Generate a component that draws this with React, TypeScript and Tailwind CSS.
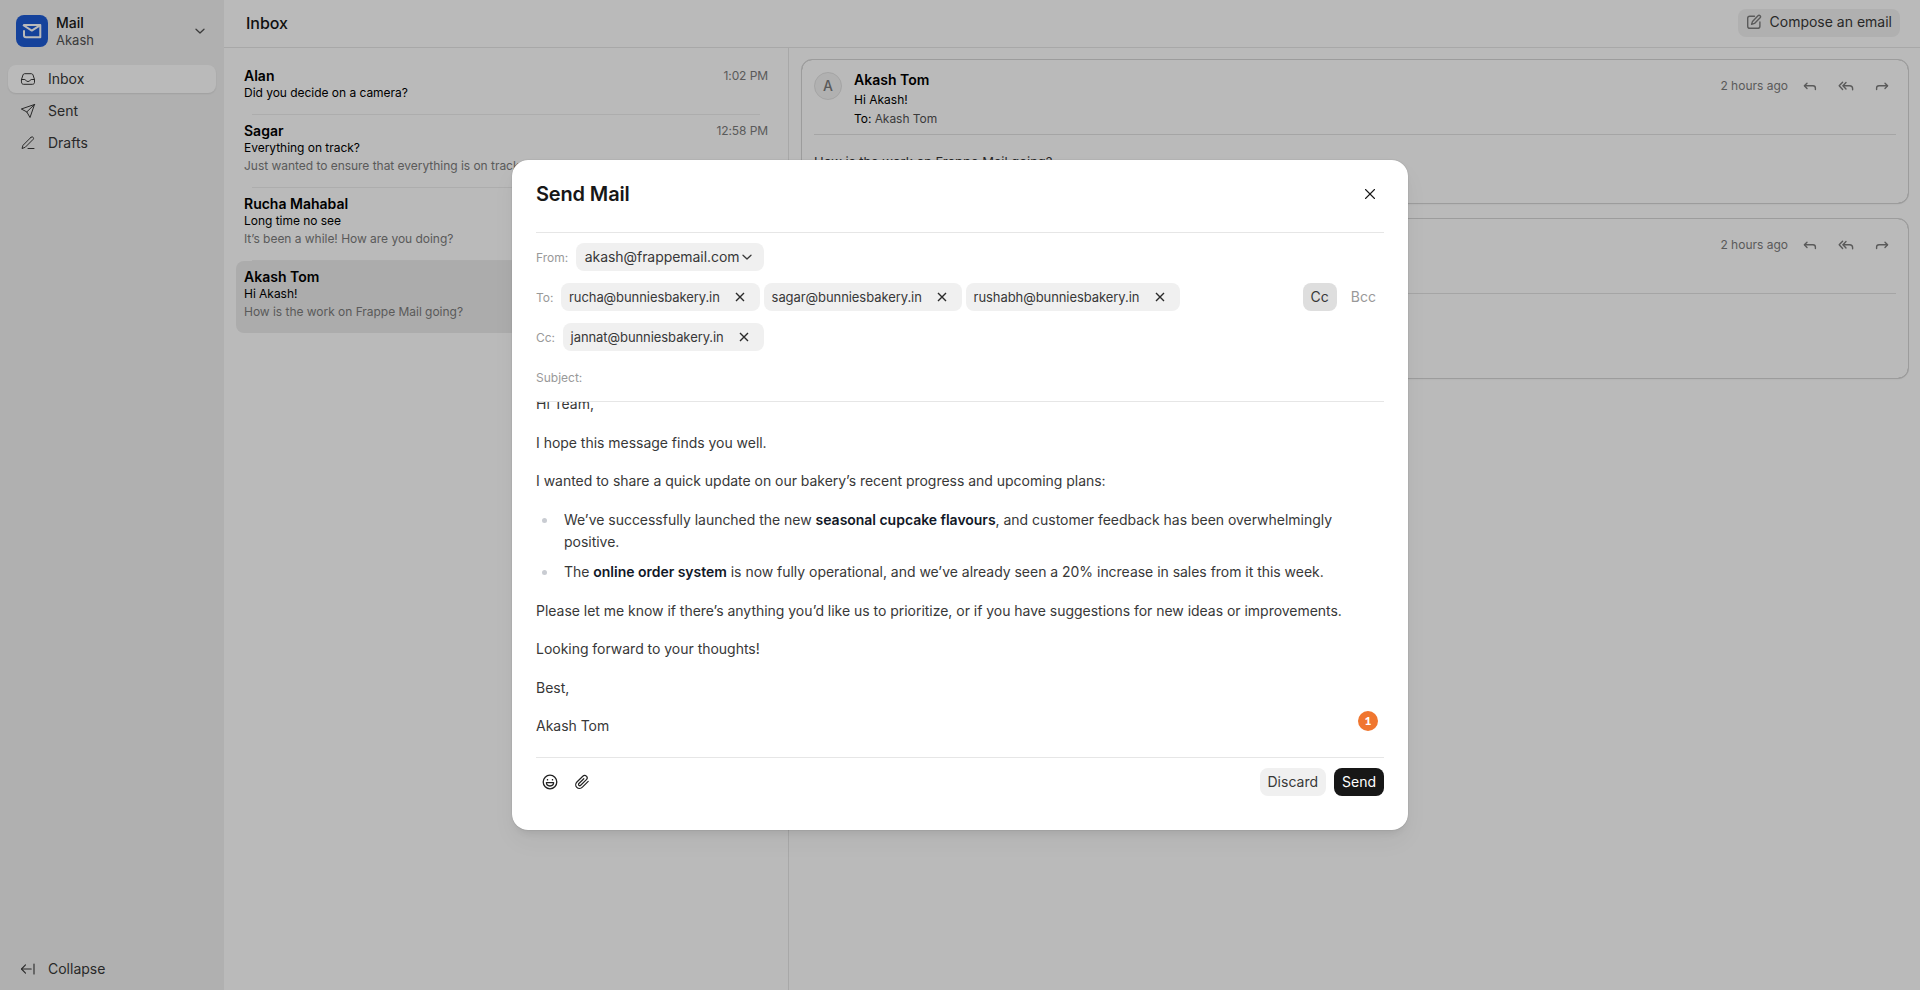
import React from 'react';

type IconProps = { d: string[]; className?: string; size?: number; sw?: number };

function Icon({ d, className = '', size = 16, sw = 1 }: IconProps) {
  return (
    <svg
      width={size}
      height={size}
      viewBox="0 0 16 16"
      fill="none"
      stroke="currentColor"
      strokeWidth={sw}
      strokeLinecap="round"
      strokeLinejoin="round"
      className={`shrink-0 ${className}`}
    >
      {d.map((p) => (
        <path key={p} d={p} />
      ))}
    </svg>
  );
}

const CHEVRON = ['M4 6.25L8 10L12 6.25'];
const CLOSE = ['M3.5 3.5L12.5 12.5', 'M12.5 3.5L3.5 12.5'];
const REPLY = ['M5 4.2L2.4 6.8L5 9.4', 'M2.6 6.8H11C12.5 6.8 13.4 7.7 13.4 9.2V10.6'];
const REPLY_ALL = ['M4.6 3.2L1.2 6.8L4.6 10.4', 'M8 3.6L5 6.8L8 10', 'M5.2 6.8H11.6C13.4 6.8 14.6 7.8 14.6 9.6V10.8'];
const FORWARD = ['M11 4.2L13.6 6.8L11 9.4', 'M13.4 6.8H5C3.5 6.8 2.6 7.7 2.6 9.2V10.6'];

function Sidebar() {
  const items = [
    {
      label: 'Inbox',
      icon: [
        'M1.5 8.5L3 3.9C3.3 3.1 3.8 2.7 4.6 2.7H11.4C12.2 2.7 12.7 3.1 13 3.9L14.5 8.5V11.3C14.5 12.5 13.7 13.3 12.5 13.3H3.5C2.3 13.3 1.5 12.5 1.5 11.3Z',
        'M1.5 8.5H4.8C5.2 8.5 5.4 8.7 5.6 9.1C6 10 6.8 10.5 8 10.5C9.2 10.5 10 10 10.4 9.1C10.6 8.7 10.8 8.5 11.2 8.5H14.5',
      ],
    },
    { label: 'Sent', icon: ['M14.5 1.5L1.3 6L6.8 8.9L10 14.5L14.5 1.5Z', 'M6.8 8.9L14.5 1.5'] },
    {
      label: 'Drafts',
      icon: [
        'M11 2.3C11.6 1.7 12.5 1.7 13.1 2.3C13.7 2.9 13.7 3.8 13.1 4.4L5.2 12.3L2 13.5L3 10.3L11 2.3Z',
        'M8 13.5H14',
      ],
    },
  ];
  return (
    <aside className="flex w-56 shrink-0 flex-col bg-[#f2f2f2] px-2 pt-[15px] pb-[7px]">
      <div className="flex h-8 items-center px-2">
        <svg width="32" height="32" viewBox="0 0 32 32" fill="none" className="shrink-0">
          <rect width="32" height="32" rx="8" fill="#1e5bd5" />
          <path d="M7.4 10H24.3V22.2H10C8.8 22.2 8 21.4 8 20.2V15.2" stroke="#fff" strokeWidth="2" strokeLinejoin="round" />
          <path d="M7 10L15.8 15.6L24 10.4" stroke="#fff" strokeWidth="2" strokeLinejoin="round" />
        </svg>
        <div className="ml-2 flex flex-1 flex-col">
          <span className="text-[14px] leading-[18px] font-medium text-[#171717]">Mail</span>
          <span className="text-[13px] leading-[17px] text-[#525252]">Akash</span>
        </div>
        <Icon d={CHEVRON} sw={1.3} className="text-[#525252]" />
      </div>
      <nav className="mt-[18px] flex flex-col gap-1">
        {items.map((it, i) => (
          <div
            key={it.label}
            className={`flex h-7 items-center rounded-lg px-3 pb-px text-[14px] leading-5 text-[#383838] ${
              i === 0 ? 'bg-white shadow-[0_1px_2px_rgba(0,0,0,0.1)]' : ''
            }`}
          >
            <Icon d={it.icon} className="text-[#383838]" />
            <span className="ml-3">{it.label}</span>
          </div>
        ))}
      </nav>
      <div className="mt-auto flex h-7 items-center px-3 pb-px text-[14px] leading-5 text-[#383838]">
        <Icon d={['M5.5 3.8L1.5 8L5.5 12.2', 'M1.7 8H11.2', 'M14 3V13']} sw={1.1} />
        <span className="ml-3">Collapse</span>
      </div>
    </aside>
  );
}

const MAILS = [
  { from: 'Alan', subject: 'Did you decide on a camera?', preview: '', time: '1:02 PM' },
  {
    from: 'Sagar',
    subject: 'Everything on track?',
    preview: 'Just wanted to ensure that everything is on track',
    time: '12:58 PM',
  },
  { from: 'Rucha Mahabal', subject: 'Long time no see', preview: 'It’s been a while! How are you doing?', time: '' },
  { from: 'Akash Tom', subject: 'Hi Akash!', preview: 'How is the work on Frappe Mail going?', time: '' },
];

function MailList() {
  return (
    <div className="w-[565px] shrink-0 border-r border-[#e6e6e6] px-3 pt-3">
      {MAILS.map((m, i) => (
        <div key={m.from}>
          <div className={`rounded-lg px-2 pt-2 pb-3 ${i === 3 ? 'bg-[#ececec]' : ''}`}>
            <div className="flex h-4 items-center justify-between">
              <span className="text-[14px] leading-4 font-semibold text-black">{m.from}</span>
              <span className="text-[12px] leading-4 tracking-[-0.08px] text-[#7c7c7c]">{m.time}</span>
            </div>
            <div className="text-[12px] leading-[18px] tracking-[-0.03px] text-black">{m.subject}</div>
            {m.preview && (
              <div className="truncate text-[12px] leading-[18px] tracking-[-0.03px] text-[#7c7c7c]">{m.preview}</div>
            )}
          </div>
          {i < 3 && <div className="mx-4 h-px bg-[#ededed]" />}
        </div>
      ))}
    </div>
  );
}

function ThreadCard({ className, compact, body }: { className: string; compact?: boolean; body?: string }) {
  return (
    <div
      className={`rounded-[10px] px-3 pt-3 shadow-[0_0_1px_rgba(0,0,0,0.45),0_1px_2px_rgba(0,0,0,0.1)] outline outline-[#d6d6d6] ${className}`}
    >
      <div className="flex h-[63px] items-start border-b border-[#e2e2e2]">
        {!compact && (
          <>
            <div className="flex size-7 shrink-0 items-center justify-center rounded-full border border-[#e2e2e2] bg-[#f3f3f3] pb-px text-[14px] leading-5 font-medium text-[#7c7c7c]">
              A
            </div>
            <div className="ml-3 flex flex-1 flex-col">
              <span className="text-[14px] leading-4 font-semibold text-black">Akash Tom</span>
              <span className="mt-[3px] text-[12px] leading-[18px] text-black">Hi Akash!</span>
              <span className="mt-px text-[12px] leading-[18px] tracking-[-0.05px] text-black">
                To: <span className="text-[#525252]">Akash Tom</span>
              </span>
            </div>
          </>
        )}
        <div className="ml-auto flex h-7 items-center text-[#7c7c7c]">
          <span className="text-[12px]">2 hours ago</span>
          <Icon d={REPLY} sw={1.4} className="mt-0.5 ml-3.5" />
          <Icon d={REPLY_ALL} sw={1.4} className="mt-0.5 ml-5" />
          <Icon d={FORWARD} sw={1.4} className="mt-0.5 mr-[6px] ml-5" />
        </div>
      </div>
      {body && <p className="mt-[17px] text-[13px] leading-[21px] text-[#383838]">{body}</p>}
    </div>
  );
}

function Chip({ email }: { email: string }) {
  return (
    <div className="flex h-7 items-center rounded-lg bg-[#f0f0f0] pr-[15px] pl-[7.5px] text-[13px] leading-5 tracking-[-0.07px] text-[#383838]">
      <span>{email}</span>
      <svg width="10" height="10" viewBox="0 0 10 10" className="ml-[15.3px] shrink-0" stroke="#2a2a2a" strokeWidth="1.4">
        <path d="M1 1L9 9M9 1L1 9" />
      </svg>
    </div>
  );
}

function Label({ children }: { children: React.ReactNode }) {
  return <span className="pt-px text-[12px] leading-[18px] text-[#999999]">{children}</span>;
}

function Dialog() {
  return (
    <div className="flex h-[670px] w-[896px] flex-col rounded-2xl bg-white px-6 shadow-[0_0_1px_rgba(0,0,0,0.35),0_6px_8px_-4px_rgba(0,0,0,0.1),0_12px_24px_rgba(0,0,0,0.04)]">
      <div className="flex h-[73px] shrink-0 items-start justify-between border-b border-[#e6e6e6] pt-5">
        <h3 className="text-[20px] leading-7 font-semibold tracking-[-0.15px] text-[#171717]">Send Mail</h3>
        <div className="flex size-7 items-center justify-center text-[#171717]">
          <Icon d={CLOSE} sw={1.1} />
        </div>
      </div>

      <div className="flex h-[169px] shrink-0 flex-col gap-3 border-b border-[#e6e6e6] pt-2.5">
        <div className="flex h-7 items-center">
          <Label>From:</Label>
          <div className="ml-2 flex h-7 items-center rounded-lg bg-[#f0f0f0] pr-[9px] pb-px pl-[8.5px] text-[14px] leading-5 tracking-[-0.05px] text-[#383838]">
            akash@frappemail.com
            <Icon d={CHEVRON} sw={1.3} className="-ml-px" />
          </div>
        </div>
        <div className="flex h-7 items-center">
          <Label>To:</Label>
          <div className="ml-2 flex flex-1 gap-1">
            <Chip email="rucha@bunniesbakery.in" />
            <Chip email="sagar@bunniesbakery.in" />
            <Chip email="rushabh@bunniesbakery.in" />
          </div>
          <div className="flex h-7 items-center rounded-lg bg-[#dedede] px-2 pb-px text-[14px] leading-5 text-[#383838]">Cc</div>
          <div className="ml-1.5 flex h-7 items-center px-2 pb-px text-[14px] leading-5 text-[#999999]">Bcc</div>
        </div>
        <div className="flex h-7 items-center">
          <Label>Cc:</Label>
          <div className="ml-2 flex">
            <Chip email="jannat@bunniesbakery.in" />
          </div>
        </div>
        <div className="flex h-7 items-center">
          <Label>Subject:</Label>
        </div>
      </div>

      <div className="relative h-[356px] shrink-0 overflow-hidden border-b border-[#e6e6e6] text-[14px] leading-[22.4px] tracking-[-0.025px] text-[#383838]">
        <div className="-mt-[8.6px] flex flex-col gap-4">
          <p>Hi Team,</p>
          <p>I hope this message finds you well.</p>
          <p>I wanted to share a quick update on our bakery’s recent progress and upcoming plans:</p>
          <ul className="flex flex-col gap-2">
            <li className="flex">
              <span className="mt-[9px] mr-[17px] ml-1.5 size-[5px] shrink-0 rounded-full bg-[#c9ccd2]" />
              <span>
                We’ve successfully launched the new{' '}
                <strong className="font-semibold text-[#111827]">seasonal cupcake flavours</strong>, and customer
                feedback has been overwhelmingly positive.
              </span>
            </li>
            <li className="flex">
              <span className="mt-[9px] mr-[17px] ml-1.5 size-[5px] shrink-0 rounded-full bg-[#c9ccd2]" />
              <span>
                The <strong className="font-semibold text-[#111827]">online order system</strong> is now fully
                operational, and we’ve already seen a 20% increase in sales from it this week.
              </span>
            </li>
          </ul>
          <p>
            Please let me know if there’s anything you’d like us to prioritize, or if you have suggestions for new ideas
            or improvements.
          </p>
          <p>Looking forward to your thoughts!</p>
          <p>Best,</p>
          <p>Akash Tom</p>
        </div>
        <div className="absolute right-1.5 bottom-[26px] flex size-5 items-center justify-center rounded-full bg-[#f0762f] font-['Lato',sans-serif] text-[12px] leading-none font-black text-white">
          1
        </div>
      </div>

      <div className="flex items-center pt-2.5">
        <svg width="16" height="16" viewBox="0 0 16 16" fill="none" stroke="#222" strokeWidth="1.3" className="ml-1.5">
          <circle cx="8" cy="8" r="6.8" />
          <path d="M4.4 8.6H11.6C11.6 10.8 10.2 12 8 12C5.8 12 4.4 10.8 4.4 8.6Z" strokeLinejoin="round" />
          <path d="M5.5 5V6.6M10.5 5V6.6" />
        </svg>
        <Icon
          d={['M14.2 7.4L8.4 13.1C6.9 14.6 4.3 14.8 2.8 13.3C1.3 11.8 1.4 9.5 2.9 8L8.8 2.2C9.8 1.2 11.5 1.2 12.4 2.2C13.4 3.2 13.4 4.7 12.4 5.7L6.7 11.3C6.2 11.8 5.4 11.8 4.9 11.3C4.4 10.8 4.4 10 4.9 9.5L9.8 4.7']}
          sw={1.2}
          className="ml-4 text-[#222]"
        />
        <div className="ml-auto flex h-7 items-center rounded-lg bg-[#f0f0f0] px-2 pb-px text-[14px] leading-5 text-[#383838]">
          Discard
        </div>
        <div className="ml-2 flex h-7 items-center rounded-lg bg-[#171717] px-2 pb-px text-[14px] leading-5 text-white">Send</div>
      </div>
    </div>
  );
}

export default function App() {
  return (
    <div className="relative h-[990px] w-[1920px] overflow-hidden bg-white font-['Inter',sans-serif] font-[420]">
      <div className="flex h-full">
        <Sidebar />
        <main className="flex min-w-0 flex-1 flex-col">
          <header className="flex h-12 shrink-0 items-center justify-between border-b border-[#e6e6e6] pr-5 pl-[22px]">
            <h1 className="pb-px text-[16px] leading-6 font-medium tracking-[-0.05px] text-[#171717]">Inbox</h1>
            <div className="mb-0.5 flex h-7 items-center rounded-lg bg-[#f2f2f2] px-2 pb-px text-[14px] leading-5 text-[#383838]">
              <Icon
                d={[
                  'M8.5 2.2H3.8C2.5 2.2 1.7 3 1.7 4.3V12.2C1.7 13.5 2.5 14.3 3.8 14.3H11.8C13.1 14.3 13.9 13.5 13.9 12.2V8',
                  'M12 1.8C12.6 1.2 13.5 1.2 14.1 1.8C14.7 2.4 14.7 3.2 14.1 3.8L8.5 9.4L5.6 10.3L6.5 7.4L12 1.8Z',
                ]}
                sw={1.4}
                className="mr-2 text-[#7c7c7c]"
              />
              Compose an email
            </div>
          </header>
          <div className="flex flex-1">
            <MailList />
            <div className="flex flex-1 flex-col gap-4 py-3 pr-3 pl-[13px]">
              <ThreadCard className="h-[143px]" body="How is the work on Frappe Mail going?" />
              <ThreadCard className="h-[159px]" compact />
            </div>
          </div>
        </main>
      </div>
      <div className="absolute inset-0 flex items-center justify-center bg-black/27">
        <Dialog />
      </div>
    </div>
  );
}
